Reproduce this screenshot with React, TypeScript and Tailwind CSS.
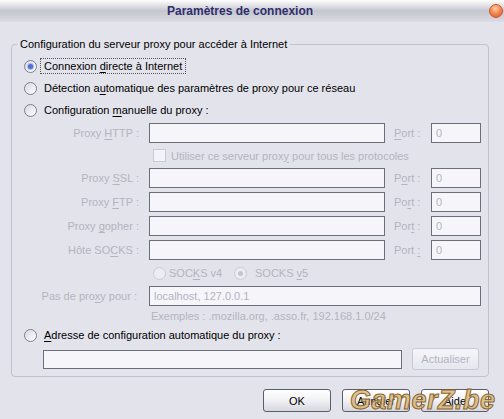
import React from "react";

type RadioProps = { checked?: boolean; disabled?: boolean };

function Radio({ checked, disabled }: RadioProps) {
  return (
    <span
      className={
        disabled
          ? "flex h-[13px] w-[13px] shrink-0 items-center justify-center rounded-full border border-[#cacad6] bg-[#ececf2]"
          : "flex h-[13px] w-[13px] shrink-0 items-center justify-center rounded-full border border-[#80808e] bg-gradient-to-br from-[#d8d8e2] to-white"
      }
    >
      {checked ? (
        <span
          className={
            disabled
              ? "h-[5px] w-[5px] rounded-full bg-[#c4c4d0]"
              : "h-[5px] w-[5px] rounded-full bg-[#4f6fd2] shadow-[0_0_0_1px_#a9bbf0]"
          }
        />
      ) : null}
    </span>
  );
}

function Key({ children }: { children: React.ReactNode }) {
  return <span className="underline underline-offset-[2px]">{children}</span>;
}

function Field({ w, value }: { w: string; value?: string }) {
  return (
    <div
      className={`${w} flex h-[20px] items-center border border-[#6e6e7a] bg-[#f5f5fa] pl-[4px] text-[#b4b4c0]`}
    >
      {value}
    </div>
  );
}

function ProxyRow({ label, portKey }: { label: React.ReactNode; portKey: React.ReactNode }) {
  return (
    <div className="flex h-[24px] items-center text-[#b4b4c0]">
      <div className="w-[117px] pr-[2px] text-right">{label}</div>
      <div className="ml-[8px]">
        <Field w="w-[236px]" />
      </div>
      <div className="ml-[9px] w-[37px]">{portKey}</div>
      <Field w="w-[50px]" value="0" />
    </div>
  );
}

function DialogButton({ children }: { children: React.ReactNode }) {
  return (
    <button className="flex h-[23px] w-[68px] items-center justify-center rounded-[3px] border border-[#5c5c6a] bg-gradient-to-b from-white via-[#f1f1f5] to-[#d6d6de] text-black">
      {children}
    </button>
  );
}

export default function App() {
  return (
    <div className="relative h-[419px] w-[504px] overflow-hidden bg-[#e3e3eb] font-['Liberation_Sans',Arial,sans-serif] text-[11px] leading-[14px] text-black">
      {/* title bar */}
      <div className="flex h-[22px] items-center bg-gradient-to-b from-white via-[#c5c5cf] to-[#dcdce4]">
        <div className="pl-[167px] text-[12px] font-bold text-[#2d2f6c]">Paramètres de connexion</div>
        <div className="ml-auto mr-[1px] h-[14px] w-[14px] rounded-full border border-[#c85a30] bg-[radial-gradient(circle_at_45%_30%,#ffd0a8_0%,#f68a52_45%,#d9522a_100%)]" />
      </div>

      <fieldset className="mx-[11px] mt-[15px] w-[478px] rounded-[4px] border border-[#c2c2cc] pb-[4px] pl-[12px]">
        <legend className="ml-[-7px] px-[3px]">Configuration du serveur proxy pour accéder à Internet</legend>

        <div className="mt-[4px] flex h-[22px] items-center">
          <Radio checked />
          <span className="ml-[3px] border border-dotted border-[#555] px-[3px] leading-[14px]">
            Connexion <Key>d</Key>irecte à Internet
          </span>
        </div>
        <div className="flex h-[22px] items-center">
          <Radio />
          <span className="ml-[7px]">
            Détection a<Key>u</Key>tomatique des paramètres de proxy pour ce réseau
          </span>
        </div>
        <div className="flex h-[22px] items-center">
          <Radio />
          <span className="ml-[7px]">
            Configuration <Key>m</Key>anuelle du proxy :
          </span>
        </div>

        <ProxyRow
          label={
            <>
              Proxy <Key>H</Key>TTP :
            </>
          }
          portKey={
            <>
              <Key>P</Key>ort :
            </>
          }
        />

        <div className="flex h-[21px] items-center pl-[129px] text-[#b4b4c0]">
          <span className="h-[13px] w-[13px] border border-[#cacad6] bg-[#f3f3f8]" />
          <span className="ml-[5px]">
            Utiliser ce serveur prox<Key>y</Key> pour tous les protocoles
          </span>
        </div>

        <ProxyRow
          label={
            <>
              Proxy <Key>S</Key>SL :
            </>
          }
          portKey={
            <>
              P<Key>o</Key>rt :
            </>
          }
        />
        <ProxyRow
          label={
            <>
              Proxy <Key>F</Key>TP :
            </>
          }
          portKey={
            <>
              Po<Key>r</Key>t :
            </>
          }
        />
        <ProxyRow
          label={
            <>
              Proxy <Key>g</Key>opher :
            </>
          }
          portKey={
            <>
              Por<Key>t</Key> :
            </>
          }
        />
        <ProxyRow
          label={
            <>
              Hôte SO<Key>C</Key>KS :
            </>
          }
          portKey={
            <>
              Port <Key>:</Key>
            </>
          }
        />

        <div className="flex h-[22px] items-center pl-[129px] text-[#b4b4c0]">
          <Radio disabled />
          <span className="ml-[3px] w-[65px]">
            SOC<Key>K</Key>S v4
          </span>
          <Radio checked disabled />
          <span className="ml-[8px]">
            SOCKS <Key>v</Key>5
          </span>
        </div>

        <div className="flex h-[24px] items-center text-[#b4b4c0]">
          <div className="w-[115px] pr-[2px] text-right">
            Pas de pro<Key>x</Key>y pour :
          </div>
          <div className="ml-[10px]">
            <Field w="w-[332px]" value="localhost, 127.0.0.1" />
          </div>
        </div>

        <div className="flex h-[16px] items-center pl-[127px] text-[#b4b4c0]">
          Exemples : .mozilla.org, .asso.fr, 192.168.1.0/24
        </div>

        <div className="flex h-[22px] items-center">
          <Radio />
          <span className="ml-[7px]">
            <Key>A</Key>dresse de configuration automatique du proxy :
          </span>
        </div>

        <div className="flex h-[26px] items-center pl-[19px]">
          <div className="h-[19px] w-[359px] border border-[#6e6e7a] bg-[#f5f5fa]" />
          <div className="ml-[10px] flex h-[22px] w-[67px] items-center justify-center rounded-[3px] border border-[#cacad6] bg-gradient-to-b from-[#f6f6fa] to-[#e6e6ee] text-[#b4b4c0]">
            Actualiser
          </div>
        </div>
      </fieldset>

      <div className="mr-[15px] mt-[12px] flex justify-end gap-[11px]">
        <DialogButton>OK</DialogButton>
        <DialogButton>Annuler</DialogButton>
        <DialogButton>Aide</DialogButton>
      </div>

      {/* watermark */}
      <div className="pointer-events-none absolute left-[350px] top-[385px] text-[27px] font-bold italic leading-[30px] tracking-[0.5px] text-[#d9b16e]/75 [-webkit-text-stroke:1px_#8a6630]">
        GamerZ.be
      </div>
    </div>
  );
}
